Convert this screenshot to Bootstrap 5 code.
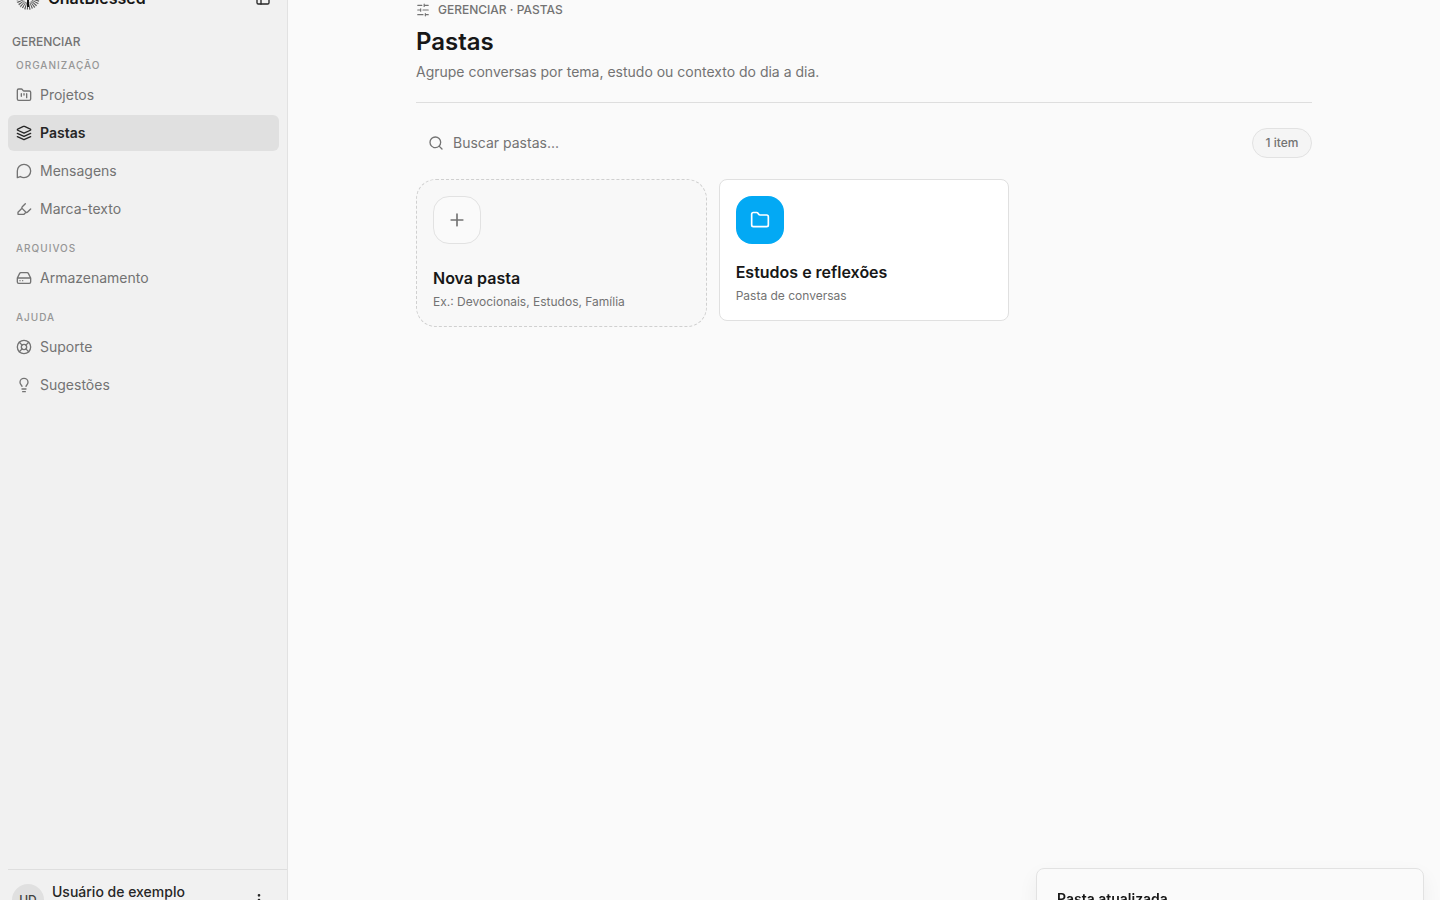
<!DOCTYPE html>
<html lang="pt-BR">
<head>
<meta charset="utf-8">
<meta name="viewport" content="width=device-width, initial-scale=1">
<title>Pastas</title>
<link href="https://cdn.jsdelivr.net/npm/bootstrap@5.3.0/dist/css/bootstrap.min.css" rel="stylesheet">
<style>
  body { font-family: Inter, "Liberation Sans", sans-serif; font-size: 14px; line-height: 20px; background: #fafafa; color: #171717; height: 100vh; overflow: hidden; }
  svg { fill: none; stroke: currentColor; stroke-width: 2; stroke-linecap: round; stroke-linejoin: round; flex: none; }
  .shell { margin-top: -28px; height: calc(100vh + 58px); }
  .sidebar { width: 288px; flex: none; background: #f1f1f1; border-right: 1px solid #e2e2e2; }
  .brand-row { height: 52px; padding: 0 16px; }
  .brand-name { font-size: 16px; font-weight: 600; line-height: 24px; color: #171717; text-decoration: none; }
  .side-title { font-size: 12px; font-weight: 500; line-height: 16px; color: #737373; padding: 0 12px; margin: 10px 0 7px; }
  .side-group { padding: 0 8px; margin-bottom: 13px; }
  .side-label { font-size: 10px; font-weight: 500; line-height: 16px; letter-spacing: 1px; color: #969696; padding: 0 8px; margin: 0 0 4px; }
  .side-group .nav { gap: 2px; }
  .side-link { display: flex; align-items: center; gap: 8px; height: 36px; padding: 0 8px; border-radius: 6px; color: #737373; text-decoration: none; }
  .side-link.active { background: #e0e0e0; color: #262626; font-weight: 600; }
  .user-row { margin-left: 8px; border-top: 1px solid #dedede; padding: 12px 20px 12px 4px; }
  .avatar { width: 32px; height: 32px; background: #e0e0e0; color: #404040; font-size: 12px; font-weight: 500; }
  .user-name { min-height: 36px; font-weight: 500; color: #262626; }
  .bare { border: 0; background: none; padding: 0; color: #262626; display: flex; }
  .content { max-width: 896px; padding-top: 30px; }
  .page-head { padding-bottom: 20px; border-bottom: 1px solid #dedede; margin-bottom: 20px; }
  .eyebrow { font-size: 12px; font-weight: 500; line-height: 16px; color: #737373; gap: 8px; margin-bottom: 8px; }
  .page-head h1 { font-size: 24px; font-weight: 600; line-height: 32px; margin: 0 0 4px; }
  .soft { color: #737373; }
  .search-box { height: 40px; padding: 0 12px; gap: 9px; color: #737373; }
  .search-box input { border: 0; background: none; outline: 0; padding: 0; width: 100%; color: #171717; }
  .search-box input::placeholder { color: #737373; opacity: 1; }
  .count { height: 30px; min-width: 60px; padding: 0 12px; border: 1px solid #e2e2e2; background: #f5f5f5; color: #737373; font-size: 12px; font-weight: 500; }
  .folders { display: grid; grid-template-columns: repeat(3, 1fr); gap: 12px; align-items: start; }
  .folder { display: block; text-align: left; padding: 16px; border: 1px solid #e0e0e0; border-radius: 8px; background: #fff; color: #171717; text-decoration: none; }
  .folder.is-new { background: #f8f8f8; border: 1px dashed #d0d0d0; border-radius: 20px; }
  .tile { display: flex; align-items: center; justify-content: center; width: 48px; height: 48px; border-radius: 16px; background: #03a9f4; color: #fff; margin-bottom: 16px; }
  .is-new .tile { background: #fafafa; border: 1px solid #e2e2e2; color: #737373; margin-bottom: 22px; }
  .folder-name { display: block; font-size: 16px; font-weight: 600; line-height: 24px; margin-bottom: 4px; }
  .folder-note { display: block; font-size: 12px; line-height: 16px; color: #737373; }
  .notice { position: fixed; right: 16px; bottom: -30px; width: 388px; height: 62px; padding: 20px; border: 1px solid #e2e2e2; border-radius: 8px; background: #fafafa; box-shadow: 0 8px 20px rgba(0,0,0,.06); font-weight: 600; }
</style>
</head>
<body>
<div class="shell d-flex">
  <aside class="sidebar d-flex flex-column">
    <div class="brand-row d-flex align-items-center justify-content-between">
      <a href="#" class="brand-name d-flex align-items-center gap-2">
        <svg width="24" height="24" viewBox="0 0 24 24"><g stroke-linecap="butt" style="stroke-linecap:butt"><circle cx="12" cy="12" r="8" stroke="#555" stroke-width="7" pathLength="56" stroke-dasharray="1 1"/><circle cx="12" cy="12" r="11.500" stroke="#888" stroke-width="1" pathLength="56" stroke-dasharray="1 3"/><path d="M12 4v17" stroke="#111" stroke-width="2"/></g></svg>
        <span>ChatBlessed</span>
      </a>
      <button class="bare" type="button" aria-label="Recolher menu"><svg width="16" height="16" viewBox="0 0 24 24"><rect x="3" y="3" width="18" height="18" rx="2"/><path d="M9 3v18M14 9h7"/></svg></button>
    </div>
    <h2 class="side-title">GERENCIAR</h2>
    <section class="side-group">
      <h3 class="side-label">ORGANIZAÇÃO</h3>
      <nav class="nav flex-column">
        <a class="side-link" href="#"><svg width="16" height="16" viewBox="0 0 24 24"><path d="M4 20h16a2 2 0 0 0 2-2V8a2 2 0 0 0-2-2h-7.900a2 2 0 0 1-1.700-.9l-.8-1.200A2 2 0 0 0 7.900 3H4a2 2 0 0 0-2 2v13a2 2 0 0 0 2 2zM8 10v4M12 10v2M16 10v6"/></svg>Projetos</a>
        <a class="side-link active" href="#" aria-current="page"><svg width="16" height="16" viewBox="0 0 24 24"><path d="M12.800 2.200a2 2 0 0 0-1.700 0L2.600 6.100a1 1 0 0 0 0 1.800l8.600 3.900a2 2 0 0 0 1.700 0l8.600-3.900a1 1 0 0 0 0-1.800zM22 12.500l-9.200 4.200a2 2 0 0 1-1.700 0L2 12.500M22 17.500l-9.200 4.200a2 2 0 0 1-1.700 0L2 17.500"/></svg>Pastas</a>
        <a class="side-link" href="#"><svg width="16" height="16" viewBox="0 0 24 24"><path d="M2 22V12a10 10 0 1 1 10 10a10 10 0 0 1-5.500-1.700z"/></svg>Mensagens</a>
        <a class="side-link" href="#"><svg width="16" height="16" viewBox="0 0 24 24"><path d="M9 11l-6 6v3h9l3-3M22 12l-4.600 4.600a2 2 0 0 1-2.800 0l-5.200-5.200a2 2 0 0 1 0-2.800L14 4"/></svg>Marca-texto</a>
      </nav>
    </section>
    <section class="side-group">
      <h3 class="side-label">ARQUIVOS</h3>
      <nav class="nav flex-column">
        <a class="side-link" href="#"><svg width="16" height="16" viewBox="0 0 24 24"><path d="M22 12H2M5.500 5.100L2 12v6a2 2 0 0 0 2 2h16a2 2 0 0 0 2-2v-6l-3.500-6.900A2 2 0 0 0 16.800 4H7.200a2 2 0 0 0-1.700 1.100zM6 16h.01M10 16h.01"/></svg>Armazenamento</a>
      </nav>
    </section>
    <section class="side-group">
      <h3 class="side-label">AJUDA</h3>
      <nav class="nav flex-column">
        <a class="side-link" href="#"><svg width="16" height="16" viewBox="0 0 24 24"><circle cx="12" cy="12" r="10"/><circle cx="12" cy="12" r="4"/><path d="M4.900 4.900l4.300 4.300M14.800 9.200l4.300-4.300M14.800 14.800l4.300 4.300M9.200 14.800l-4.300 4.300"/></svg>Suporte</a>
        <a class="side-link" href="#"><svg width="16" height="16" viewBox="0 0 24 24"><path d="M15 14c.2-1 .7-1.700 1.500-2.500 1-.9 1.500-2.200 1.500-3.500A6 6 0 0 0 6 8c0 1 .2 2.200 1.500 3.500.7.700 1.300 1.500 1.500 2.500M9 18h6M10 22h4"/></svg>Sugestões</a>
      </nav>
    </section>
    <div class="user-row d-flex align-items-center gap-2 mt-auto">
      <span class="avatar rounded-circle d-flex align-items-center justify-content-center">UD</span>
      <span class="user-name flex-grow-1">Usuário de exemplo</span>
      <button class="bare" type="button" aria-label="Opções da conta"><svg width="16" height="16" viewBox="0 0 24 24"><path d="M12 5h.01M12 12h.01M12 19h.01" stroke-width="4" style="stroke-width:4"/></svg></button>
    </div>
  </aside>
  <main class="flex-grow-1">
    <div class="content mx-auto">
      <header class="page-head">
        <div class="eyebrow d-flex align-items-center"><svg width="14" height="14" viewBox="0 0 24 24"><path d="M21 4h-7M10 4H3M21 12h-9M8 12H3M21 20h-5M12 20H3M14 2v4M8 10v4M16 18v4"/></svg>GERENCIAR · PASTAS</div>
        <h1>Pastas</h1>
        <p class="soft m-0">Agrupe conversas por tema, estudo ou contexto do dia a dia.</p>
      </header>
      <div class="d-flex align-items-center mb-3">
        <label class="search-box d-flex align-items-center flex-grow-1"><svg width="16" height="16" viewBox="0 0 24 24"><circle cx="11" cy="11" r="8"/><path d="M21 21l-4.300-4.300"/></svg><input type="search" placeholder="Buscar pastas..." aria-label="Buscar pastas"></label>
        <span class="count rounded-pill d-flex align-items-center justify-content-center">1 item</span>
      </div>
      <div class="folders">
        <button class="folder is-new" type="button">
          <span class="tile"><svg width="20" height="20" viewBox="0 0 24 24"><path d="M5 12h14M12 5v14"/></svg></span>
          <span class="folder-name">Nova pasta</span>
          <span class="folder-note">Ex.: Devocionais, Estudos, Família</span>
        </button>
        <a class="folder" href="#">
          <span class="tile"><svg width="20" height="20" viewBox="0 0 24 24"><path d="M20 20a2 2 0 0 0 2-2V8a2 2 0 0 0-2-2h-7.900a2 2 0 0 1-1.700-.9L9.600 3.900A2 2 0 0 0 7.900 3H4a2 2 0 0 0-2 2v13a2 2 0 0 0 2 2z"/></svg></span>
          <span class="folder-name">Estudos e reflexões</span>
          <span class="folder-note">Pasta de conversas</span>
        </a>
      </div>
    </div>
  </main>
</div>
<div class="notice" role="status">Pasta atualizada</div>
<script src="https://cdn.jsdelivr.net/npm/bootstrap@5.3.0/dist/js/bootstrap.bundle.min.js"></script>
</body>
</html>
